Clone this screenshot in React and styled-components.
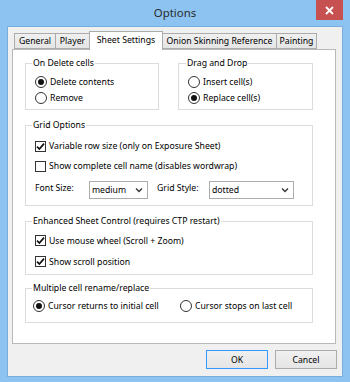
import React from "react";
import styled, { createGlobalStyle } from "styled-components";

const FONT = `"Noto Sans", "Open Sans", "DejaVu Sans", sans-serif`;

const Global = createGlobalStyle`
  html, body { margin: 0; padding: 0; background: #8cc3f0; }
  body { font-family: ${FONT}; font-size: 8.7px; color: #000; }
  * { box-sizing: border-box; }
`;

const Window = styled.div`
  width: 350px;
  height: 382px;
  background: #8cc3f0;
  display: flex;
  flex-direction: column;
  position: relative;
`;

const TitleBar = styled.div`
  height: 26px;
  display: flex;
  align-items: center;
  justify-content: center;
  position: relative;
`;

const Title = styled.div`
  font-family: ${FONT};
  font-size: 11.4px;
  color: #2b2b2b;
  margin-top: -1px;
`;

const CloseButton = styled.div`
  position: absolute;
  top: 0;
  right: 7px;
  width: 27px;
  height: 20px;
  background: #c75050;
  display: flex;
  align-items: center;
  justify-content: center;
`;

const Client = styled.div`
  margin: 0 7px;
  height: 351px;
  border: 1px solid #79ade0;
  background: #f0f0f0;
  padding: 4px 6px 0 4px;
  display: flex;
  flex-direction: column;
`;

const TabStrip = styled.div`
  display: flex;
  align-items: flex-end;
  padding-left: 2px;
  height: 18px;
  position: relative;
  z-index: 1;
`;

const Tab = styled.div`
  width: ${(p) => p.$w}px;
  height: ${(p) => (p.$active ? 19 : 16)}px;
  margin-left: ${(p) => (p.$first ? 0 : -1)}px;
  margin-bottom: ${(p) => (p.$active ? -1 : 0)}px;
  border: 1px solid #acacac;
  border-bottom: ${(p) => (p.$active ? "none" : "1px solid #acacac")};
  background: ${(p) => (p.$active ? "#fff" : "linear-gradient(#f0f0f0, #e5e5e5)")};
  display: flex;
  align-items: center;
  justify-content: center;
  padding-bottom: ${(p) => (p.$active ? 2 : 0)}px;
  position: relative;
  z-index: ${(p) => (p.$active ? 2 : 1)};
  white-space: nowrap;
`;

const Panel = styled.div`
  width: 324px;
  height: 295px;
  background: #fff;
  border: 1px solid #b9b9b9;
  padding: 13px 0 0 12px;
  display: flex;
  flex-direction: column;
`;

const Row = styled.div`
  display: flex;
  gap: 19px;
`;

const Group = styled.div`
  position: relative;
  width: ${(p) => p.$w}px;
  height: ${(p) => p.$h}px;
  margin-top: ${(p) => p.$mt || 0}px;
  border: 1px solid #dcdcdc;
  padding: ${(p) => p.$pad};
  display: flex;
  flex-direction: column;
`;

const GroupTitle = styled.span`
  position: absolute;
  top: -7px;
  left: ${(p) => p.$left}px;
  background: #fff;
  padding: 0 1px;
  line-height: 12px;
  white-space: nowrap;
`;

const OptionRow = styled.label`
  display: flex;
  align-items: center;
  height: ${(p) => p.$h}px;
  width: ${(p) => (p.$w ? `${p.$w}px` : "auto")};
  flex: none;
  gap: 3px;
  white-space: nowrap;
`;

const InlineOptions = styled.div`
  display: flex;
  align-items: center;
  height: 16px;
`;

const RadioCircle = styled.span`
  width: 12px;
  height: 12px;
  border-radius: 50%;
  border: 1px solid #333;
  background: #fff;
  display: flex;
  align-items: center;
  justify-content: center;
  flex: none;
  &::after {
    content: "";
    width: 6px;
    height: 6px;
    border-radius: 50%;
    background: ${(p) => (p.$on ? "#111" : "transparent")};
  }
`;

const CheckBox = styled.span`
  width: 11px;
  height: 11px;
  border: 1px solid #333;
  background: #fff;
  display: flex;
  align-items: center;
  justify-content: center;
  flex: none;
`;

const ComboRow = styled.div`
  display: flex;
  align-items: center;
  margin-top: 4px;
  height: 19px;
`;

const FieldLabel = styled.span`
  width: ${(p) => p.$w}px;
  margin-top: -3px;
  white-space: nowrap;
  flex: none;
`;

const Combo = styled.div`
  width: ${(p) => p.$w}px;
  height: 18px;
  border: 1px solid #acacac;
  background: #fff;
  display: flex;
  align-items: center;
  justify-content: space-between;
  padding: 0 4px 0 2px;
  flex: none;
`;

const ButtonRow = styled.div`
  display: flex;
  justify-content: flex-end;
  gap: 7px;
  margin-top: 6px;
  width: 325px;
`;

const Button = styled.div`
  width: 62px;
  height: 19px;
  border: 1px solid ${(p) => (p.$default ? "#3399ff" : "#acacac")};
  background: linear-gradient(#f0f0f0, #e5e5e5);
  display: flex;
  align-items: center;
  justify-content: center;
`;

const Radio = ({ on, w, children }) => (
  <OptionRow $h={16} $w={w}>
    <RadioCircle $on={on} />
    <span>{children}</span>
  </OptionRow>
);

const Check = ({ on, h, children }) => (
  <OptionRow $h={h}>
    <CheckBox>
      {on && (
        <svg width="9" height="9" viewBox="0 0 9 9">
          <path d="M1 4.6 L3.4 7 L8 1.6" fill="none" stroke="#111" strokeWidth="1.7" />
        </svg>
      )}
    </CheckBox>
    <span>{children}</span>
  </OptionRow>
);

const Chevron = () => (
  <svg width="8" height="6" viewBox="0 0 8 6">
    <path d="M1 1.5 L4 4.5 L7 1.5" fill="none" stroke="#333" strokeWidth="1.3" />
  </svg>
);

const tabs = [
  { label: "General", w: 42 },
  { label: "Player", w: 35 },
  { label: "Sheet Settings", w: 74, active: true },
  { label: "Onion Skinning Reference", w: 115 },
  { label: "Painting", w: 41 },
];

export default function App() {
  return (
    <>
      <Global />
      <Window>
        <TitleBar>
          <Title>Options</Title>
          <CloseButton>
            <svg width="9" height="9" viewBox="0 0 9 9">
              <path d="M1 1 L8 8 M8 1 L1 8" stroke="#fff" strokeWidth="1.8" />
            </svg>
          </CloseButton>
        </TitleBar>
        <Client>
          <TabStrip>
            {tabs.map((t, i) => (
              <Tab key={t.label} $w={t.w} $active={t.active} $first={i === 0}>
                {t.label}
              </Tab>
            ))}
          </TabStrip>
          <Panel>
            <Row>
              <Group $w={134} $h={47} $pad="10px 0 0 9px">
                <GroupTitle $left={6}>On Delete cells</GroupTitle>
                <Radio on>Delete contents</Radio>
                <Radio>Remove</Radio>
              </Group>
              <Group $w={135} $h={47} $pad="10px 0 0 9px">
                <GroupTitle $left={7}>Drag and Drop</GroupTitle>
                <Radio>Insert cell(s)</Radio>
                <Radio on>Replace cell(s)</Radio>
              </Group>
            </Row>
            <Group $w={288} $h={81} $mt={15} $pad="10px 0 0 9px">
              <GroupTitle $left={6}>Grid Options</GroupTitle>
              <Check on h={20}>Variable row size (only on Exposure Sheet)</Check>
              <Check h={20}>Show complete cell name (disables wordwrap)</Check>
              <ComboRow>
                <FieldLabel $w={54}>Font Size:</FieldLabel>
                <Combo $w={59}>
                  <span>medium</span>
                  <Chevron />
                </Combo>
                <FieldLabel $w={9} />
                <FieldLabel $w={52}>Grid Style:</FieldLabel>
                <Combo $w={85}>
                  <span>dotted</span>
                  <Chevron />
                </Combo>
              </ComboRow>
            </Group>
            <Group $w={288} $h={54} $mt={15} $pad="8px 0 0 9px">
              <GroupTitle $left={6}>Enhanced Sheet Control (requires CTP restart)</GroupTitle>
              <Check on h={21}>Use mouse wheel (Scroll + Zoom)</Check>
              <Check on h={21}>Show scroll position</Check>
            </Group>
            <Group $w={288} $h={35} $mt={13} $pad="9px 0 0 7px">
              <GroupTitle $left={6}>Multiple cell rename/replace</GroupTitle>
              <InlineOptions>
                <Radio on w={147}>Cursor returns to initial cell</Radio>
                <Radio>Cursor stops on last cell</Radio>
              </InlineOptions>
            </Group>
          </Panel>
          <ButtonRow>
            <Button $default>OK</Button>
            <Button>Cancel</Button>
          </ButtonRow>
        </Client>
      </Window>
    </>
  );
}
